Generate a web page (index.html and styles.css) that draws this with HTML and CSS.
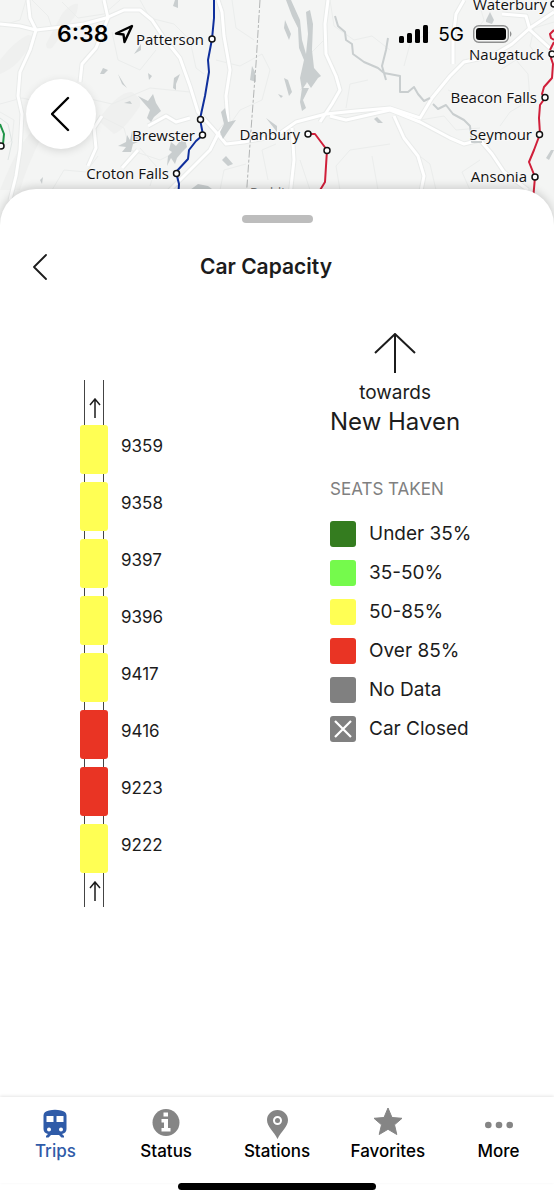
FILE: index.html
```html
<!DOCTYPE html>
<html lang="en">
<head>
    <meta charset="UTF-8">
    <meta name="viewport" content="width=device-width, initial-scale=1.0">
    <title>Car Capacity</title>
    <link rel="stylesheet" href="styles.css">
</head>
<body>
<div class="app">
    <header class="map">
        <svg class="map-canvas" viewBox="0 0 554 230" preserveAspectRatio="xMidYMin slice">
            <!-- hills -->
            <g class="hills">
                <path d="M0 60Q16 40 28 35Q36 36 34 42Q26 52 18 62Q10 70 0 74Z"/>
                <path d="M62 14Q72 2 78 4Q78 14 72 20L52 48Q46 50 46 44Z"/>
                <path d="M0 190Q20 140 34 130Q44 128 42 136Q26 168 20 190Z"/>
                <path d="M98 120Q120 90 132 92Q142 98 140 106Q124 130 114 134Z"/>
            </g>
            <!-- minor roads -->
            <g class="minor">
                <path d="M0 104L22 98L50 104L86 98L112 104L150 88L190 92M32 0L48 16L52 28M62 2L78 18L104 14L120 0M112 32L118 60L140 70L156 50M0 150L12 140L14 120L0 112M100 116L124 128L130 150L160 160L180 150M140 0L150 18L174 24L190 40L196 68L204 74"/>
                <path d="M232 0L236 28L254 40M216 60L240 66L262 54L270 70L262 100L240 110L226 130M268 180L262 150L276 144M330 0L334 26L354 40L372 36L390 50M346 108L350 84L368 80M404 66L410 44L430 32M420 120L444 116L456 130L480 128M436 190L430 164L412 150M340 190L336 166L350 150L390 144M372 156L378 190M470 190L462 172L480 160M500 70L516 60L528 74L530 100L510 112L500 126M478 0L484 20L474 34M300 90L312 78L310 54L324 40"/>
                <path d="M52 190L64 170L86 172L98 156M150 186L156 166L140 148M220 190L224 170L246 164M540 60L530 46L534 28L554 22M448 90L470 100L484 92M300 160L310 190M0 26L20 20L26 0"/>
            </g>
            <!-- highways: grey casing under white -->
            <g class="casing">
                <path id="h1" d="M28 0L30 18L36 30L30 50L20 72L18 96L22 114L20 150L16 176L10 200"/>
                <path id="h2" d="M0 24L20 26L36 30L62 27L84 24L106 18L124 10L140 10L152 20L164 38L180 58L190 86L198 112L216 132L226 144L244 142L276 136L296 122L326 114L356 111L390 108L420 118L432 98L450 76L464 62L492 56L512 44L530 28L554 12"/>
                <path id="h3" d="M104 0L108 18L96 48L82 64L80 82"/>
                <path id="h4" d="M218 0L222 12L224 36L230 70L226 96L228 122L218 134L210 150L192 168L176 184L160 200"/>
                <path id="h5" d="M328 0L325 24L326 54L336 76L340 90L332 104L320 122"/>
                <path id="h6" d="M330 116L346 120L390 110L420 122L450 138L464 144L480 140L492 154L504 172L528 190"/>
                <path id="h7" d="M394 116L404 138L418 156L424 176L420 196M292 128L294 160L290 196"/>
                <path id="h8" d="M453 64L453 40L456 14L464 0M502 14L526 16L530 30L554 52M148 126L166 116L176 122L190 118M122 168L138 150M102 116L94 128L96 148L88 166"/>
            </g>
            <g class="highway">
                <use href="#h1"/><use href="#h2"/><use href="#h3"/><use href="#h4"/>
                <use href="#h5"/><use href="#h6"/><use href="#h7"/><use href="#h8"/>
            </g>
            <!-- lakes and reservoirs -->
            <g class="water">
                <path d="M286 0L292 16L298 28L299 48L304 60L300 78L302 90L307 82L311 88L318 78L321 76L314 68L312 50L313 24L310 10L306 12L308 34L306 54L302 40L300 20L291 0Z"/>
                <path d="M302 88L309 88L303 100L306 108L302 111L300 102Z"/>
                <path d="M285 20L291 34L289 40L284 28ZM284 78L288 80L292 92L289 96ZM278 94L283 96L281 98Z"/>
                <path d="M153 94L156 103L161 111L154 117L151 122L147 118L150 110L143 102L138 96L148 101Z"/>
                <path d="M118 146L126 142L127 135L130 140L132 131L137 135L142 134L138 142L133 144L131 152L122 152L126 147Z"/>
                <path d="M169 150L171 142L176 146L184 136L187 147L182 152L177 158L175 164L171 158L167 166L168 156L172 152Z"/>
                <path d="M221 112L225 108L228 122L236 120L229 130L223 139L220 132L224 124Z"/>
                <path d="M252 66L255 72L256 82L250 80ZM222 160L226 156L233 164L228 166Z"/>
                <path d="M118 74L124 84L127 88L122 84ZM174 78L180 74L176 84L176 90L173 88ZM148 73L152 76L149 80ZM100 74L103 68L108 70L104 74ZM124 103L130 101L132 104ZM134 54L141 44L141 50ZM175 0L178 0L178 8L173 6Z"/>
                <path d="M190 190L198 184L208 186L216 192ZM40 180L43 177L42 184ZM374 119L377 117L383 123L378 123ZM486 20L490 12L494 20L492 24L486 22ZM266 118L277 126L277 132ZM546 158L551 150L554 150L549 160Z"/>
            </g>
            <path class="river" d="M335 16L338 26L345 32L346 40L352 44L353 54L364 62L378 68L384 73L400 76L400 92L408 92L414 87L418 94L424 101L430 98M386 80L382 66L386 50L388 38M433 104L438 109L446 105L453 114L464 120L470 126L472 142L482 142"/>
            <path class="state-line" d="M260 0L256 64L251 130L246 200"/>
            <path class="shore" d="M0 118L8 124L12 142L8 160"/>
            <!-- train lines -->
            <path class="line harlem" d="M214 0L214 18L212 39L208 60L209 72L205 96L200 119L203 135L196 141L189 150L188 159L176 172L179 184L178 200"/>
            <path class="line danbury" d="M308 134L315 134L327 150L325 182L314 200"/>
            <path class="line waterbury" d="M554 30L550 34L551 38L554 40M552 55L551 58L553 64L552 78L544 87L542 94L545 98L540 105L539 118L540 134L534 150L529 162L535 177L533 200M554 42L550 50"/>
            <path class="line hudson" d="M0 124L4 134L3 144L0 148"/>
            <g class="stop">
                <circle cx="212" cy="39" r="3"/><circle cx="200.500" cy="119.500" r="3"/>
                <circle cx="202.500" cy="135" r="3"/><circle cx="176.500" cy="173.500" r="3"/>
                <circle cx="308" cy="134" r="3"/><circle cx="327" cy="150.500" r="3"/>
                <circle cx="552" cy="54" r="3"/><circle cx="545" cy="97.500" r="3"/>
                <circle cx="539.500" cy="134.500" r="3"/><circle cx="535" cy="177" r="3"/>
                <circle cx="1" cy="146" r="3"/><circle cx="554" cy="4" r="3"/>
            </g>
            <g class="place" text-anchor="end">
                <text x="204" y="45">Patterson</text>
                <text x="195" y="141">Brewster</text>
                <text x="169" y="179">Croton Falls</text>
                <text x="300" y="140">Danbury</text>
                <text x="547" y="10">Waterbury</text>
                <text x="544" y="60">Naugatuck</text>
                <text x="537" y="103">Beacon Falls</text>
                <text x="532" y="140">Seymour</text>
                <text x="527" y="182">Ansonia</text>
            </g>
            <text class="town" x="250" y="197">Redding</text>
        </svg>

        <div class="status-bar">
            <div class="clock">
                <span>6:38</span>
                <svg width="20" height="20" viewBox="0 0 20 20"><path d="M18 2L2 9.500L9.500 10.500L10.500 18Z" fill="none" stroke="#000" stroke-width="2.400" stroke-linejoin="round"/></svg>
            </div>
            <div class="signal">
                <svg width="30" height="18" viewBox="0 0 30 18">
                    <rect x="0" y="11" width="5" height="7" rx="1.500"/><rect x="8" y="8" width="5" height="10" rx="1.500"/>
                    <rect x="16" y="4" width="5" height="14" rx="1.500"/><rect x="24" y="0" width="5" height="18" rx="1.500"/>
                </svg>
                <span>5G</span>
                <svg width="40" height="18" viewBox="0 0 40 18">
                    <rect x=".7" y=".7" width="34.600" height="16.600" rx="5" fill="none" stroke="#8e8f8f" stroke-width="1.400"/>
                    <rect x="3" y="3" width="30" height="12" rx="3"/>
                    <path d="M37 6Q40 9 37 12Z" fill="#8e8f8f"/>
                </svg>
            </div>
        </div>

        <button class="map-back" aria-label="Back to map">
            <svg width="20" height="36" viewBox="0 0 20 36"><path d="M17 2L1 18L17 34" fill="none" stroke="#000" stroke-width="2.400" stroke-linecap="round" stroke-linejoin="round"/></svg>
        </button>
    </header>

    <main class="sheet">
        <div class="handle"></div>
        <div class="sheet-head">
            <button class="back" aria-label="Back">
                <svg width="16" height="26" viewBox="0 0 16 26"><path d="M14 1L2 13L14 25" fill="none" stroke="#1c1c1c" stroke-width="1.800" stroke-linecap="round" stroke-linejoin="round"/></svg>
            </button>
            <h1>Car Capacity</h1>
        </div>

        <div class="capacity">
            <div class="train">
                <svg class="heading" width="12" height="20" viewBox="0 0 12 20"><path d="M6 20V1M1 7L6 1L11 7"/></svg>
                <ol class="cars">
                    <li><i class="car yellow"></i>9359</li>
                    <li><i class="car yellow"></i>9358</li>
                    <li><i class="car yellow"></i>9397</li>
                    <li><i class="car yellow"></i>9396</li>
                    <li><i class="car yellow"></i>9417</li>
                    <li><i class="car red"></i>9416</li>
                    <li><i class="car red"></i>9223</li>
                    <li><i class="car yellow"></i>9222</li>
                </ol>
                <svg class="heading" width="12" height="20" viewBox="0 0 12 20"><path d="M6 20V1M1 7L6 1L11 7"/></svg>
            </div>

            <div class="info">
                <div class="direction">
                    <svg width="42" height="40" viewBox="0 0 42 40"><path d="M21 40V1M1 20L21 1L41 20" fill="none" stroke="#1c1c1c" stroke-width="2"/></svg>
                    <span class="towards">towards</span>
                    <span class="terminal">New Haven</span>
                </div>
                <h2>SEATS TAKEN</h2>
                <ul class="legend">
                    <li><i class="swatch dark-green"></i>Under 35%</li>
                    <li><i class="swatch green"></i>35-50%</li>
                    <li><i class="swatch yellow"></i>50-85%</li>
                    <li><i class="swatch red"></i>Over 85%</li>
                    <li><i class="swatch grey"></i>No Data</li>
                    <li><i class="swatch grey"><svg width="26" height="26" viewBox="0 0 26 26"><path d="M5 5L21 21M21 5L5 21" stroke="#fff" stroke-width="2.200"/></svg></i>Car Closed</li>
                </ul>
            </div>
        </div>
    </main>

    <nav class="tabs">
        <a href="#trips" class="active">
            <svg width="28" height="32" viewBox="0 0 28 32">
                <path fill="currentColor" fill-rule="evenodd" d="M8 3.500Q14 2 20 3.500Q25.500 4.500 25.500 8.500V22Q25.500 26 21 27L23 29V30.500H20.500L18 28H10L7.500 30.500H5V29L7 27Q2.500 26 2.500 22V8.500Q2.500 4.500 8 3.500ZM5.500 9V15H12.500V9ZM15.500 9V15H22.500V9ZM8 20.500A2 2 0 1 0 8 24.500A2 2 0 1 0 8 20.500ZM20 20.500A2 2 0 1 0 20 24.500A2 2 0 1 0 20 20.500Z"/>
            </svg>
            Trips
        </a>
        <a href="#status">
            <svg width="28" height="32" viewBox="0 0 28 32">
                <circle cx="14" cy="15.500" r="13.500" fill="#858585"/>
                <path fill="#fff" d="M11.500 5.500H16V9.500H11.500ZM9.500 12H16V21H18.500V24.500H9.500V21H12V15.500H9.500Z"/>
            </svg>
            Status
        </a>
        <a href="#stations">
            <svg width="28" height="32" viewBox="0 0 28 32">
                <path fill="#858585" fill-rule="evenodd" d="M14.500 3C8.500 3 4 7.500 4 13C4 19.500 11 24.500 14.500 32C18 24.500 25 19.500 25 13C25 7.500 20.500 3 14.500 3ZM14.500 9A4.500 4.500 0 1 1 14.500 18A4.500 4.500 0 1 1 14.500 9Z"/>
                <circle cx="14.500" cy="13.500" r="2.500" fill="#858585"/>
            </svg>
            Stations
        </a>
        <a href="#favorites">
            <svg width="30" height="32" viewBox="0 0 30 32">
                <path fill="#858585" stroke="#858585" stroke-linejoin="round" d="M15 1L19 10.500L29 11.300L21.500 17.800L23.800 27.500L15 22.300L6.200 27.500L8.500 17.800L1 11.300L11 10.500Z"/>
            </svg>
            Favorites
        </a>
        <a href="#more">
            <svg width="28" height="32" viewBox="0 0 28 32" fill="#858585"><circle cx="3.300" cy="18" r="3.300"/><circle cx="14" cy="18" r="3.300"/><circle cx="24.700" cy="18" r="3.300"/></svg>
            More
        </a>
    </nav>
    <div class="home-indicator"></div>
</div>
</body>
</html>
```
FILE: styles.css
```css
* { box-sizing: border-box; }
body { margin: 0; font-family: Inter, "Liberation Sans", sans-serif; color: #1c1c1c; background: #fff; }
h1, h2, ol, ul { margin: 0; padding: 0; font-weight: 400; }
ol, ul { list-style: none; }
svg { display: block; flex: none; }
button { border: 0; padding: 0; background: none; cursor: pointer; }

.app { display: flex; flex-direction: column; min-height: 100vh; }

/* map */
.map { position: relative; padding: 20px 41px 80px 26px; background: #f4f5f4; overflow: hidden; }
.map-canvas { position: absolute; top: 0; left: 0; width: 100%; height: 100%; }
.hills { fill: #eff0ef; }
.minor { fill: none; stroke: #ebedec; stroke-width: 1; }
.casing { fill: none; stroke: #e9ebea; stroke-width: 5; stroke-linejoin: round; }
.highway { fill: none; stroke: #fff; stroke-width: 3; stroke-linejoin: round; }
.water { fill: #c9cecf; }
.river { fill: none; stroke: #c9cecf; stroke-width: 2; stroke-linejoin: round; }
.state-line { fill: none; stroke: #b3b5b5; stroke-width: 1; stroke-dasharray: 8 2 3 2; }
.shore { fill: none; stroke: #dfe5e4; stroke-width: 1; }
.line { fill: none; stroke-width: 2; stroke-linejoin: round; }
.harlem { stroke: #0f2f9c; }
.danbury, .waterbury { stroke: #d01f3a; }
.hudson { stroke: #1f9447; }
.stop { fill: #fff; stroke: #111; stroke-width: 1.5; }
.place { font: 15px "Open Sans", sans-serif; fill: #111; stroke: #f8f8f8; stroke-width: 2; paint-order: stroke; }
.town { font: 13px "Open Sans", sans-serif; fill: #777; }

.status-bar { position: relative; display: flex; justify-content: space-between; align-items: center; height: 28px; padding-left: 31px; color: #000; }
.clock, .signal { display: flex; align-items: center; }
.clock { gap: 6px; font-size: 23px; font-weight: 600; }
.signal { gap: 9px; font-size: 19px; }
.map-back { position: relative; display: flex; align-items: center; justify-content: center; width: 70px; height: 70px; margin-top: 31px; border-radius: 50%; background: #fff; box-shadow: 0 2px 8px rgba(0, 0, 0, .12); }

/* bottom sheet */
.sheet { position: relative; flex: 1; margin-top: -40px; padding-top: 26px; border-radius: 36px 36px 0 0; background: #fff; box-shadow: 0 -2px 8px rgba(0, 0, 0, .16); }
.handle { width: 71px; height: 8px; margin: 0 auto; border-radius: 4px; background: #bdbdbd; }
.sheet-head { display: grid; grid-template-columns: 1fr auto 1fr; align-items: center; padding: 0 54px 0 32px; margin-top: 28px; }
.sheet-head h1 { font-size: 21px; font-weight: 600; line-height: 32px; }
.back { justify-self: start; }

.capacity { display: grid; grid-template-columns: 3fr 2fr; align-items: start; padding: 50px 4px 40px 0; }

.train {
    margin: 47px 0 0 80px;
    padding: 18px 0 6px;
    background:
        linear-gradient(#444, #444) 4px 0 / 1px 100% no-repeat,
        linear-gradient(#444, #444) 23px 0 / 1px 100% no-repeat;
}
.heading { margin-left: 9px; fill: none; stroke: #1c1c1c; stroke-width: 1.5; }
.cars { display: flex; flex-direction: column; gap: 8px; margin: 7px 0 8px; }
.cars li { display: flex; gap: 13px; font-size: 17px; line-height: 42px; }
.car { width: 28px; height: 49px; border-radius: 3px; }

.direction { display: inline-flex; flex-direction: column; align-items: center; }
.towards { margin-top: 8px; font-size: 19px; line-height: 24px; }
.terminal { font-size: 24px; line-height: 34px; }
.info h2 { margin-top: 40px; font-size: 17px; line-height: 20px; color: #808080; }
.legend { display: flex; flex-direction: column; gap: 13px; margin-top: 22px; }
.legend li { display: flex; align-items: center; gap: 13px; font-size: 19px; line-height: 26px; }
.swatch { flex: none; width: 26px; height: 26px; border-radius: 3px; }

.dark-green { background: #347c1f; }
.green { background: #75fa4c; }
.yellow { background: #ffff54; }
.red { background: #e93424; }
.grey { background: #808080; }

/* tab bar */
.tabs { position: relative; display: grid; grid-template-columns: repeat(5, 1fr); padding: 10px 0 20px; background: #fff; box-shadow: 0 -1px 3px rgba(0, 0, 0, .1); }
.tabs a { display: flex; flex-direction: column; align-items: center; font-size: 17px; font-weight: 500; line-height: 24px; color: #000; text-decoration: none; }
.tabs .active { color: #2f5ba8; }
.home-indicator { position: relative; width: 198px; height: 7px; margin: 0 auto 10px; border-radius: 4px; background: #000; }
```
